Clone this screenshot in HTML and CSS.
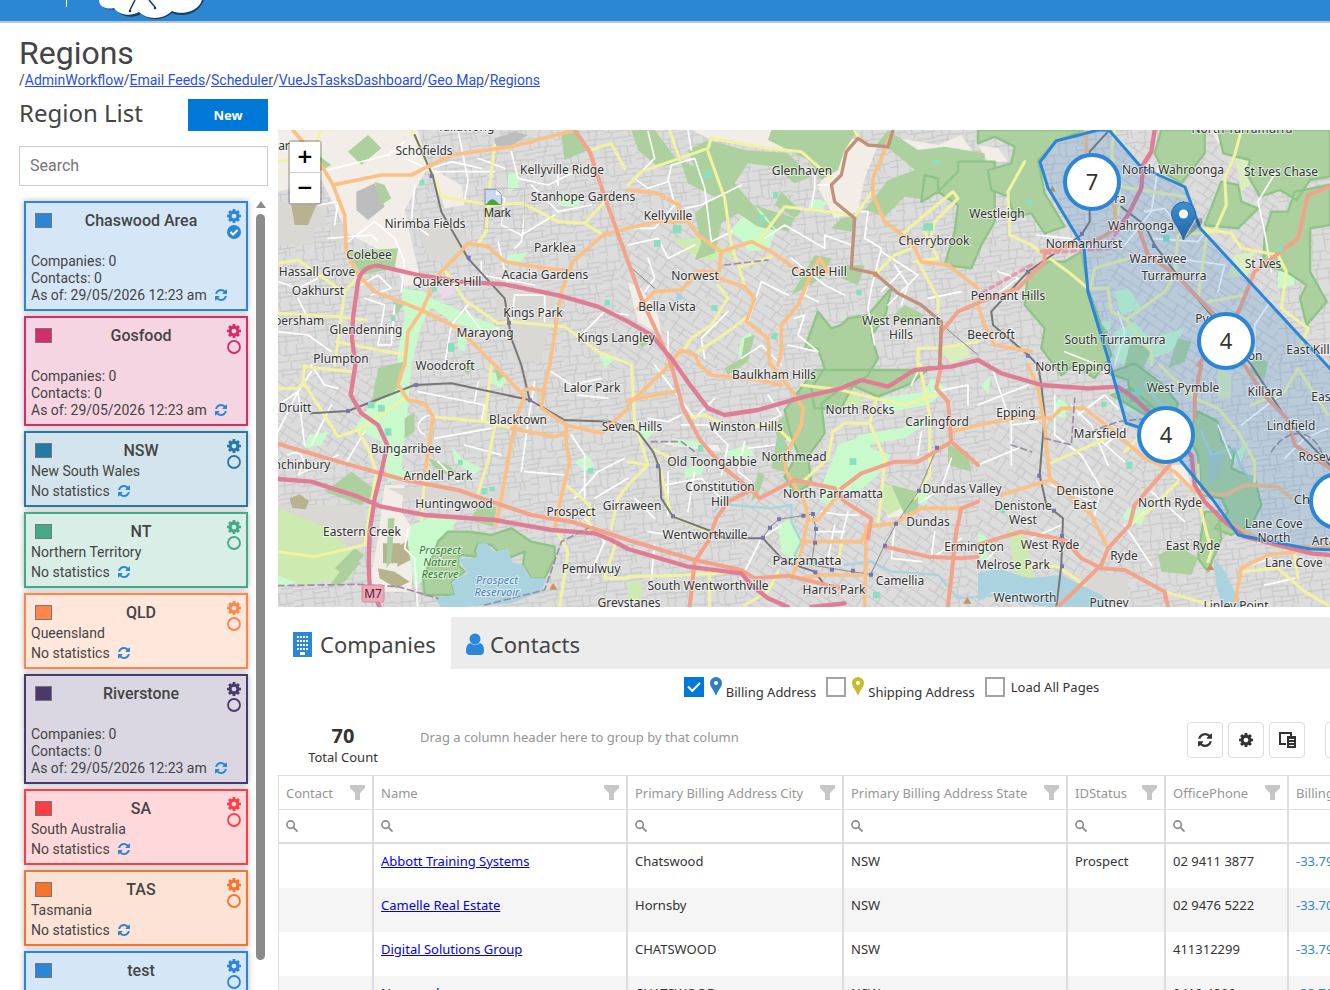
FILE: index.html
```
<!DOCTYPE html>
<html lang="en">
<head>
  <meta charset="utf-8">
  <title>Regions</title>
  <link rel="stylesheet" href="styles.css">
</head>
<body>

<svg class="defs" aria-hidden="true">
  <symbol id="cog" viewBox="0 0 1536 1536"><path d="M1024 768q0-106-75-181t-181-75-181 75-75 181 75 181 181 75 181-75 75-181zm512-109v222q0 12-8 23t-20 13l-185 28q-19 54-39 91 35 50 107 138 10 12 10 25t-9 23q-27 37-99 108t-94 71q-12 0-26-9l-138-108q-44 23-91 38-16 136-29 186-7 28-36 28h-222q-14 0-24.500-8.500t-11.500-21.500l-28-184q-49-16-90-37l-141 107q-10 9-25 9-14 0-25-11-126-114-165-168-7-10-7-23 0-12 8-23 15-21 51-66.500t54-70.500q-27-50-41-99l-183-27q-13-2-21-12.500t-8-23.500v-222q0-12 8-23t19-13l186-28q14-46 39-92-40-57-107-138-10-12-10-24 0-10 9-23 26-36 98.500-107.500t94.500-71.500q13 0 26 10l138 107q44-23 91-38 16-136 29-186 7-28 36-28h222q14 0 24.500 8.500t11.500 21.500l28 184q49 16 90 37l142-107q9-9 24-9 13 0 25 10 129 119 165 170 7 8 7 22 0 12-8 23-15 21-51 66.500t-54 70.500q26 50 41 98l183 28q13 2 21 12.500t8 23.500z"/></symbol>
  <symbol id="refresh" viewBox="0 0 1536 1536"><path d="M1511 928q0 5-1 7-64 268-268 434.500t-478 166.500q-146 0-282.500-55t-243.500-157l-129 129q-19 19-45 19t-45-19-19-45v-448q0-26 19-45t45-19h448q26 0 45 19t19 45-19 45l-137 137q71 66 161 102t187 36q134 0 250-65t186-179q11-17 53-117 8-23 30-23h192q13 0 22.500 9.500t9.500 22.500zm25-800v448q0 26-19 45t-45 19h-448q-26 0-45-19t-19-45 19-45l138-138q-148-137-349-137-134 0-250 65t-186 179q-11 17-53 117-8 23-30 23h-199q-13 0-22.500-9.500t-9.500-22.500v-7q65-268 270-434.500t480-166.500q146 0 284 55.500t245 156.500l130-129q19-19 45-19t45 19 19 45z"/></symbol>
  <symbol id="ring" viewBox="0 0 14 14"><circle cx="7" cy="7" r="6" fill="none" stroke="currentColor" stroke-width="1.800"/></symbol>
  <symbol id="tick" viewBox="0 0 14 14"><circle cx="7" cy="7" r="7"/><path d="M3.500 7l2.500 2.600L10.600 5" fill="none" stroke="#fff" stroke-width="2"/></symbol>
  <symbol id="funnel" viewBox="0 0 15 15"><path d="M0 0h15v3l-5 5v7H5V8L0 3z"/></symbol>
  <symbol id="lens" viewBox="0 0 13 13"><circle cx="5" cy="5" r="4" fill="none" stroke="currentColor" stroke-width="1.800"/><path d="M8 8l4.500 4.500" stroke="currentColor" stroke-width="2"/></symbol>
  <symbol id="pin" viewBox="0 0 12 19"><path d="M6 0a6 6 0 0 1 6 6c0 4-4 7-6 13C4 13 0 10 0 6a6 6 0 0 1 6-6z"/><circle cx="6" cy="6" r="2" fill="#fff"/></symbol>
</svg>

<header class="topbar">
  <span class="topbar-line"></span>
  <svg class="logo" viewBox="0 0 108 21">
    <path d="M2 0c0 8 8 11 16 9 4 8 17 10 25 5 8 7 22 7 31-1 8 4 26 3 32-13z" fill="#153f63"/>
    <path d="M1 0c0 7 8 10 15 8 5 7 16 9 25 4 8 8 24 8 33-1 8 4 26 2 30-11z" fill="#fff"/>
    <path d="M37 0l-5 10M51 0l6 7" stroke="#163a5a" stroke-width="1.500"/><circle cx="32" cy="11" r="1.300"/><circle cx="57" cy="8" r="1.300"/>
  </svg>
</header>

<div class="page-head">
  <h1>Regions</h1>
  <nav class="crumbs">/<a href="#">AdminWorkflow</a>/<a href="#">Email Feeds</a>/<a href="#">Scheduler</a>/<a href="#">VueJsTasksDashboard</a>/<a href="#">Geo Map</a>/<a href="#">Regions</a></nav>
</div>

<div class="layout">
  <aside class="sidebar">
    <div class="sidebar-head">
      <h2>Region List</h2>
      <button class="new">New</button>
    </div>
    <input class="search" type="text" placeholder="Search" aria-label="Search">
    <div class="list-wrap">
      <div class="list">
        <section class="card blue">
          <i class="swatch"></i><h3>Chaswood Area</h3>
          <div class="tools"><svg><use href="#cog"/></svg><svg><use href="#tick"/></svg></div>
          <p class="desc"></p>
          <div class="stats">Companies: 0<br>Contacts: 0<br>As of: 29/05/2026 12:23 am <svg><use href="#refresh"/></svg></div>
        </section>
        <section class="card pink">
          <i class="swatch"></i><h3>Gosfood</h3>
          <div class="tools"><svg><use href="#cog"/></svg><svg><use href="#ring"/></svg></div>
          <p class="desc"></p>
          <div class="stats">Companies: 0<br>Contacts: 0<br>As of: 29/05/2026 12:23 am <svg><use href="#refresh"/></svg></div>
        </section>
        <section class="card teal">
          <i class="swatch"></i><h3>NSW</h3>
          <div class="tools"><svg><use href="#cog"/></svg><svg><use href="#ring"/></svg></div>
          <p class="desc">New South Wales</p>
          <p class="nostats">No statistics <svg><use href="#refresh"/></svg></p>
        </section>
        <section class="card green">
          <i class="swatch"></i><h3>NT</h3>
          <div class="tools"><svg><use href="#cog"/></svg><svg><use href="#ring"/></svg></div>
          <p class="desc">Northern Territory</p>
          <p class="nostats">No statistics <svg><use href="#refresh"/></svg></p>
        </section>
        <section class="card peach">
          <i class="swatch"></i><h3>QLD</h3>
          <div class="tools"><svg><use href="#cog"/></svg><svg><use href="#ring"/></svg></div>
          <p class="desc">Queensland</p>
          <p class="nostats">No statistics <svg><use href="#refresh"/></svg></p>
        </section>
        <section class="card purple">
          <i class="swatch"></i><h3>Riverstone</h3>
          <div class="tools"><svg><use href="#cog"/></svg><svg><use href="#ring"/></svg></div>
          <p class="desc"></p>
          <div class="stats">Companies: 0<br>Contacts: 0<br>As of: 29/05/2026 12:23 am <svg><use href="#refresh"/></svg></div>
        </section>
        <section class="card red">
          <i class="swatch"></i><h3>SA</h3>
          <div class="tools"><svg><use href="#cog"/></svg><svg><use href="#ring"/></svg></div>
          <p class="desc">South Australia</p>
          <p class="nostats">No statistics <svg><use href="#refresh"/></svg></p>
        </section>
        <section class="card orange">
          <i class="swatch"></i><h3>TAS</h3>
          <div class="tools"><svg><use href="#cog"/></svg><svg><use href="#ring"/></svg></div>
          <p class="desc">Tasmania</p>
          <p class="nostats">No statistics <svg><use href="#refresh"/></svg></p>
        </section>
        <section class="card blue">
          <i class="swatch"></i><h3>test</h3>
          <div class="tools"><svg><use href="#cog"/></svg><svg><use href="#ring"/></svg></div>
        </section>
      </div>
      <div class="scroll"><i class="scroll-up"></i><i class="scroll-thumb"></i></div>
    </div>
  </aside>

  <main>
    <div class="map">
      <svg class="tiles" viewBox="278 130 1052 477" preserveAspectRatio="xMinYMid slice">
        <defs>
          <pattern id="streets" width="150" height="132" patternUnits="userSpaceOnUse" patternTransform="rotate(-8)">
            <path class="street" d="M0 18h60l8 10h82M0 44h42v-26M42 44l38 4 12-20M0 72h30l6-28M36 72h54V48h60M90 72l60 6M60 72v60M0 100h60M24 100V72M24 132v-32M60 100l46 6V74M106 106h44M128 78v28M112 28V0M140 28v20M20 18V0M60 18V0M84 132v-28M120 132v-26M60 118h60M0 118h24M112 14h38M80 0v27M18 44V18M118 60h32M60 86h46M0 58h36M132 106v26"/>
          </pattern>
          <pattern id="streets2" width="126" height="144" patternUnits="userSpaceOnUse" patternTransform="rotate(34)">
            <path class="street" d="M0 14h126M0 38h66M84 14v62M66 38h60M0 62h84M24 14v48M46 38v24M0 90h40V62M40 90h86M104 38v52M0 114h126M20 90v24M62 90v54M92 114v30M30 114v30M0 132h30M62 130h64M60 14V0M108 14V0"/>
          </pattern>
          <linearGradient id="pinFill" x2="0" y2="1"><stop stop-color="#3a90d0"/><stop offset="1" stop-color="#2465a4"/></linearGradient>
        </defs>

        <g transform="translate(278 125) scale(.33333)">
          <rect width="3156" height="1450" fill="#dcdcdc"/>
          <rect width="3156" height="1450" fill="url(#streets)"/>
          <path fill="#dcdcdc" d="M1050 250h500l-60 480h-500zM0 760h420v260H0zM2150 860h460l-60 590h-500zM2500 60h500v700h-500zM1400 1050h600v400h-600z"/>
          <path fill="url(#streets2)" d="M1050 250h500l-60 480h-500zM0 760h420v260H0zM2150 860h460l-60 590h-500zM2500 60h500v700h-500zM1400 1050h600v400h-600z"/>

          <!-- farmland and industrial -->
          <path fill="#f2eee7" d="M0 15h420l30 110-70 130 20 90 30 130-50 10-40-90-130-70-80-160L0 200zM460 130l90 50 10 60-60 10zM1240 15h430l-50 60-200-10-120-20zM1720 40l80 20-40 100-20 100-70 20-50-90 30-60zM1860 40l120 20 70-30 40 60-100 10-90-10zM2100 60l60 10 30 40-60 0zM2800 15l50 0 20 30-50 10zM320 1080l60 0-10 80 40 60-10 180h-130l30-160z"/>
          <path fill="#d9d8d4" d="M0 230l120 10 60 120-180 0zM110 360h90v-60l-90 10zM410 320l120-40 60 90-70 60-60-30zM330 1090h360l20 70-320-40zM0 1140h260v170H0zM640 490l190 20-40 200h-80zM2250 1350h300v90h-300z"/>
          <path fill="#bdbdbd" d="M235 200l55-25 30 70-50 40-35-30zM650 40l60-20 40 10-60 40-40-10z"/>
          <path fill="#b7b38f" d="M40 240h75l-25 60H50zM315 1255h52v60h-52zM360 1265l30-20 8 60-40 20zM300 1330l50 10 45 30-40 20-50-30zM35 1120l30-12 28 20-10 25-40-4z"/>
          <path fill="#ebdbe8" d="M475 490l40-15 20 30-40 15z"/>
          <path fill="#f2efe9" d="M1050 470l40 20 50 80 10 60-70-40zM2680 1020l40 0 20 60-50-20zM1820 1150l50-10 10 30-50 10zM1150 950l170 10 10 20-160-20z"/>

          <!-- parks -->
          <g class="park">
            <path d="M370 490l70 10 30 30-40 70-30 120-10 130-20 180 40 30-80 10-20-120-80-40 60-90 60-20 10-120 20-100zM400 1200l80-30 60 10-50 90-40 80-40 40-20-130zM460 520l140 60 70 30-60 10-90-30-70-50zM480 1390l40-20 60 20-10 40z"/>
            <path d="M1410 260l60-10 30 60-30 60-60 10-20-40-40-20zM1640 1060l40-100 80-30 20 40 60 20-40 60-70 60-40-20-40 50-30-20zM1800 820l140-20 20-40 50 30-60 50-110 20zM1740 930l130-20 60-30 10 20-60 40-120 20zM1500 1200l40-20 30 60 0 80-60-40z"/>
            <path d="M2510 620l60-30 70 80-50 60-80-20zM2510 500l40-10 40 60-60 20zM2110 130l40 40-20 90-40-20zM2110 780l30-30-10 60zM2550 780l40 20 10 60-60 0zM2550 1150l60 0-20 50-60-20zM0 1300l60 10 60 40-120 40zM540 620l30 10-10 50-20-10zM2100 1220l40 30-20 60-20-10zM2840 1010l70-60-20 60zM2650 630l70-20-40 70-60 20zM3000 440l50-20 0 60-50 10z"/>
            <path d="M690 390l60-10-20 30-50 10zM640 740l50 20-20 30-40-20zM960 680l50 20-30 30zM520 960l30 40 60 30-20 20-60-40zM890 1010l40-20 20 30-30 20zM90 930l60-10-20 40-50 10zM1180 940l80 10 20 20-90-10zM1100 900l30 20-30 30-20-20zM1220 1030l60-10-10 30-50 10zM1340 980l70-20 20 30-60 20zM1630 780l20 20-10 40-30-20zM2340 820l30 20-10 40-40-10zM2470 590l30 0-10 40-20 0zM1390 640l30-20-10 60-30 20zM1600 220l50 10-20 30-40-10zM1920 1100l40 10-20 30-30-10zM850 210l60 10-10 30-60-10zM690 150l30-10 0 50-30 10zM620 1230l70 0-20 20-60 0z"/>
          </g>
          <path fill="#cdebb0" d="M1180 340l110 0 80 50-80 20-60-30zM0 1150l150 60 90 90-20 60-150 20-70-30zM1810 1080l60 0 20 60-60 30-20-40zM2190 1210l50 20 30 130-60-10zM1685 800l60 0 10 40-60 5zM1050 1370l40 0 0 60h-40z"/>
          <path fill="#dcedc0" d="M2870 390l60-10-20 70-60 10zM2870 100l60 0 10 60-50 40zM1980 670l80-15 20 40-60 20zM2820 730l40 20 0 70-40 0z"/>

          <!-- bushland -->
          <g class="bush">
            <path d="M1060 15h70l60 80 60 30-20-50 60-30 110 30 130 10 70 70-50 20-60-50-80-10-40 60 60 70 60 70-50-10-60-40-50 30-20 90-60 20 20-50-20-90 60-50-80-40-20-60-70 10-60-50zM1480 15h260l-40 60-20 60-50 30-40-60-120-60zM1830 15l90 60 80-10 120 20v110l-60 20-60-40-50 50-70-10-60 60-60-20 70-90 80-30-70-60-50-10zM210 80l60-50 40 40-60 50zM60 120l60-30 40 30-90 50zM290 170l30 10 20 40-30 20zM210 380l150-10-10 60-100 20zM850 30l50-15 30 60-70 30zM330 720l50-10-20 80-80 50 20-110zM140 1100l80-60 80 60-50 40zM600 1145l55 0-10 60-70-20zM450 1000l60 20 60 50-40-10-60-30zM170 1330l60-60 30 20-60 60zM1540 510l70-120 50 10-30 60-50 30zM1500 920l40 60-20 60-40-10z"/>
            <path d="M1700 420l60 0-20 60-50-20zM1880 540l60 30-40 30-60-20zM1490 900l40-40 40 10-40 70-30 20zM1840 1080l80 20 0 50-40 20zM2010 960l60 20 10 60-70-20zM1690 280l50-10-20 50-60-10z"/>
            <path d="M2640 1290l60-30 60 40-20 50-90-10zM2480 190l0 40 40-20zM560 740l0-20h30l-20 30z"/>
            <path d="M1430 240l120 40-20 40-40-10-30-40zM1510 200l60 60-20 20-60-40zM1400 640l30-10-20 80-60 40-10-20 50-30zM1440 1040l20 10-20 60-20 20zM345 530l30 10-20 30zM380 880l30-20 0 60-30 20zM330 1180l20 0-10 130-15 20zM2160 130l40 20-20 40-30-20zM2560 640l60 40-30 60-50-20zM2440 560l50 60-10 80-40-60zM2700 640l40 10-20 60-50 20zM2930 690l40 20-10 50-50-10zM650 730l30 20-20 20zM1080 640l40-20 10 20-40 30zM200 1320l50-10-50 60-50 20z"/>
          </g>
          <g class="reserve">
            <path d="M1940 150l40 10 0 40 60-60 0-30h110v180l-40 70-30 70-80-10 30-100 10-80-60-40-50 30zM1620 560l40 50 30-10 20-20 60-10 70-80-20 90-40 50 20 70-30 50-50 40-30 60h-80l-10-60 40-60-20-60-40 0zM1610 735h290l60-10-60 50-100 40-90-40-80 60 10 90-50 70 10 80-50 30-30-50 40-70-20-50-20-80z"/>
            <path d="M2100 15h320l-80 30-60 60 20 100 60 100-60 20-40-60-50 10-20-60-50-20-10-60 70-20 10-50-60-30-50 20zM2250 450l60-40 50 0 50-30 20 110 70 200-50 70-60-40-40 30-60-80 10-60-60-70zM2650 15h130v70l-70 90-50-30-30-60zM2820 15h336v140l-60 10-40 60-50-30-60 20-40-70 10-40-80-20zM2830 170l50 10 10 50 50 20-60 60-100-10zM2960 330l20-70 50 0 20-60 106-20v120l-60 10 0 130 50 90-60 70-20-80 20-40-60-40-70-20z"/>
            <path d="M2490 745l80-30 80 60 50 60-20 70-50-10-20-50-50-20-10-60zM2760 860l60 30 10 60 40 30-10 50 70 30 20 80-30 60-60 30-50-20 40-50-20-40-60-10-10-120-30-60zM2780 1160l40 0 10 80-40 100-30-40zM2500 810l60-20 80 70-20 20z"/>
            <path d="M440 1410l-5-50 35-80 10-30 30-30 60 0 70 10 60-20 60 40 70 15v35l-30 60h-40l-25-40 5-40-50 20-30-20-20-20-40-5-10 25 10 15-55-5-5 30 20 20-40 30 10 40h-50z"/>
          </g>

          <!-- water -->
          <path class="water" d="M470 1420l60-10-10-40 50-25-30-45 55 0 5-45 25 0 25 25 40-10 10 40 35 10 25 40h45l-15 40-90 35-140 11h-70zM2100 1345l60-15 90 30 100-10 120 60 40 40h-170l-140-20-60-30-40 30zM2805 1300l30 30 60 120h-60l-20-70zM1200 500l20 20-30 10z"/>
          <path fill="#aac8c0" d="M2790 965l50 30-20 60-30 20z"/>
          <path class="river" d="M1310 1160l30-40 20 20 120 10 60-10 0 50 30 60-20 40 20 30 60-10M2600 780l50 60 20 0M2770 920l30 70 70-20 20 60 30 30"/>
          <path class="river" stroke-width="9" d="M1700 1320l80-10 60 30 140 10 60 70 120-10"/>

          <!-- minor roads -->
          <g class="minor">
            <path d="M130 140l200-50 50-40M380 100l90 40 180 0M540 15l30 150-10 60M150 340l130-10 20 20M120 240l60-10-10 70M210 350l80-60 60 50 30 70-10 90M410 180l-10 110 50 40M700 80l20 80 90 20 80-40M840 130l0 50M610 410l0 40 160 30M660 350l30 130M710 370l20-20 10-80M250 480l50-30 40 40-60 20M260 520l60 20-20 120 40 0 10-120M500 720l20-120 50-60M560 550l60 80 40-20M700 590l10-80 90 0 0 80M900 640l80-80 70 10M760 180l80 80 100-20M0 470l60 20 60-30M60 520l40 80M0 620l90 10 70 50M430 140l90-30 90 20M600 100l80 30M640 200l40 20-10 80 60 30 100-60"/>
            <path transform="translate(1050)" d="M60 20l20 80-60 60 40 30 60-20 10-50 70-20 30 90 20 160 60-30M120 160l20 80-60 70-80 0M0 360l90-20 30 60 80-40M340 180l-120 60-50 10M180 15l10 60M560 140l0 50-10 60M610 180l-40 0M410 340l60-40 120 70 0-40 80 30M490 400l100 80 60 30M360 590l40-120 80 40M340 700l60-40 60 60M700 260l20 0-10 80 50 30-30 120-10 60 20 110M760 380l110 70-90 90M800 420l40 60-20 60M120 620l0 100M500 580l30-10-20 60 60 50-90-20M60 400l20 60-30 40M300 560l-80 80 10 60M550 450l-20 60 40 20M820 440l-60 60M900 520l100-20"/>
            <path transform="translate(2100)" d="M540 130l-20 130-80 100M500 260l60-10 30 40M590 400l150 20-20 80M900 130l-60 100 20 90 20 120M175 330l100 10 60 20M60 440l60 20-80 60M870 540l-40 60 0 90M420 560l20 60-30 100M520 340l140 10 30-40M260 680l100 40"/>
            <path transform="translate(0 720)" d="M0 200l60-120 40-60M60 80l20 160M100 240l60-120M440 210c-40-20-10-60 20-60M470 220l170-30M770 50l-20 120-20 150M880 210l40 60 0 130M740 320l120 10M0 120l60-40M560 240l110 30M600 50l-10 60M200 300l60-100M30 270c40-20 60 10 30 60l120-60M890 400l70-80 80-40M920 460l60 70-50 110M950 400l100-60M420 740l-10-160-30-30 10-60M420 80l200 40-10 50M100 0l40 60 40 10M820 20l60 40 90-20M900 90l90 10M480 290l60 60"/>
            <path transform="translate(1050 720)" d="M80 0l120 160 60-60M160 180l80 0 60 60-20 90M120 320l0 130M200 320l-20 120M110 360l110-20 60 60M360 250l80-10M420 90l40 60-80 40M620 480l-20 100M660 440l-20 80M340 640l60-120 60-40M560 500l90 0M80 540l-10 100M880 200l-10 70M970 280l-30 90-60 40M1000 520l-90 60 10-80M800 480l-10 100 90 10M350 230l-20 90 40 30M920 80l100-20 0 60M60 160l60 10 40-20M20 400l60 60M60 500l140 20M580 440l60 10 50 0M880 0l-30 60"/>
            <path transform="translate(2100 720)" d="M40 0l60 180 0 120M100 180l80-10M230 90l0 120 80 60 60 100-20 80M0 120l150-60M0 300l120-50M300 150l80-60 40 40M520 380l100 90M360 220l80 70M440 480l80 120M10 600l60-60M790 180l130-100M920 280l60-60 70-30M720 180l40 100M220 360l120 50M250 480l-90 40M420 520l80-80M280 120l60 60 50 120M380 240l60-50M820 600l60-20M860 660l90-20"/>
          </g>

          <g class="secondary">
            <path d="M650 60L630 230 625 320 600 355M400 15L460 140 490 215 640 240 735 235 840 290 920 295 980 230M920 295L975 330M940 75L1000 55 1040 130M0 110L100 90 130 15M0 415L60 405 180 490M0 565L180 575 265 585M240 455L200 500 170 720M175 650L380 690M500 435L560 525 660 595 700 590 860 605 960 680 1050 715"/>
            <path transform="translate(1050)" d="M125 15L155 105M0 180L40 140 240 70 250 40 420 70 520 80 610 160M240 80L290 220 310 360 350 480M390 350L470 245 640 265 680 275 740 190M340 425L430 395M680 15l10 20M820 330L890 270 975 200 990 220 920 290 910 330M890 320l40 80-70 10M750 440L800 390 850 370M870 410L930 520 930 560M270 480L300 520 250 600 190 640 165 680M210 680L300 620 350 580M870 670h60l120-20M870 670v60"/>
            <path transform="translate(2100)" d="M140 110L90 200 95 330 160 360 270 440 330 490 390 490 400 560 440 580 520 680 520 720M450 400L350 430 340 480M430 185L620 215M790 15L770 90 740 160 745 240 710 320 600 330 590 450 560 500 450 580M660 310L760 325 790 370 900 390 925 440 910 550 990 610 970 660M685 340L660 520M690 530L800 510M410 20L400 80 430 230 410 290"/>
            <path transform="translate(0 720)" d="M80 0L75 50 180 215 240 195 380 100M240 195L270 250 295 320 260 540 110 575 0 560M640 0L620 170M465 155L620 170 705 190M650 185L630 290 600 385M440 340L430 465M870 365L935 420 930 500M1050 360L1020 400 1000 490M0 70H60L80 50M80 5L220 20M1015 530L980 640H1050M830 490L870 560 845 726"/>
            <path transform="translate(1050 720)" d="M10 0L20 170 60 300 0 360M0 290L60 300M80 255L130 280M180 160L230 150 290 180M380 180H440L490 230M520 60L640 75 740 100 830 120 920 90M530 345L600 280 615 200 650 175H725L770 280 760 400 750 470M745 100L725 175M875 0L905 150V330L860 400M0 635L180 630 330 620M245 610V726M350 720L420 680 450 620M90 290L130 450 240 500M640 530L630 600"/>
            <path transform="translate(2100 720)" d="M215 295L385 220M480 220L440 260M600 350L520 430 470 470M660 300L665 420 700 560 690 590M560 680L700 720M150 600L240 605 320 660M545 0L650 100 720 130 780 200 830 290V350M820 120L920 80 960 10 1050 150M790 620L900 610 980 680 1050 720M950 570L960 640"/>
          </g>

          <g class="rail">
            <path d="M410 30L465 155 490 260 570 400 680 520 700 640 730 720 755 825 860 885 1000 890 1080 920 1125 980 1145 1030 1150 1120 1185 1175 1290 1215 1340 1240 1455 1240 1520 1310 1610 1340 1640 1380M100 865L210 858 410 780 520 775 755 825M2280 720L2290 780 2300 870 2285 1050 2305 1140 2355 1180 2350 1320 2335 1446M2490 20L2435 80V290L2410 330 2250 440 2140 560 2145 600 2250 690 2280 720M2530 245L2600 300 2630 360 2690 440 2800 570 2920 720 3030 890 3156 1020"/>
          </g>
          <path class="lightrail" d="M1455 1238L1475 1208 1502 1183 1575 1172 1605 1167 1613 1210 1610 1252 1600 1320 1720 1340 1778 1348 1820 1260 1855 1196 1923 1097 1977 968M1980 590L2100 690M1050 420L1130 490"/>

          <g class="primary">
            <path d="M45 15L130 120 165 180 200 270 205 380 240 450 290 500 430 555 540 610 650 720M165 180L310 150 400 150 520 90 700 65 890 15M1050 310L975 330 885 410 870 440 740 420 680 410 630 365 570 355 530 400 480 450 430 560 390 620 380 720M885 410L850 500 815 720"/>
            <path transform="translate(1050)" d="M0 195L90 205 150 240 180 290 210 330 280 380 370 350 430 380 500 430 550 450 600 440 575 400 540 470 510 540 460 600V680L450 720M280 380L270 460 350 485 380 520 355 590 420 640 425 720M795 15L735 160V210L770 290 850 350 880 410 960 420 1050 490M0 310L90 290 170 290M30 550L80 500 160 495 210 440H270M120 720L160 675 200 690 215 720"/>
            <path transform="translate(2100)" d="M325 15V90L410 250 415 290M0 540l20 60 30 60 110 20"/>
            <path transform="translate(0 720)" d="M650 0L740 95 725 130 700 230 670 400 655 480M378 0L360 60 390 105 440 115 465 155 440 330M815 0L800 60 790 130 865 180V240L875 290 855 370 830 490M700 190L830 215 865 205M865 180L970 205 1050 130M740 75l20-5 40 10"/>
            <path transform="translate(1050 720)" d="M0 105L140 80M0 120L125 0M215 0L250 30 390 45 460 60M430 0L490 75 525 130 520 180 470 280 475 320 530 410 540 460 520 560 490 640M630 390L570 465H545M520 530H700L720 485 800 475 880 430H1000M715 480L710 726M1050 180L970 200M520 640l60-10h120"/>
            <path transform="translate(2100 720)" d="M0 180L130 155 220 160 250 130H320L420 210 500 280 590 320 650 380 740 390 800 360 900 365 940 400M740 465L800 500 900 545H1056M150 0L180 70 200 180 215 340 340 450 385 540M70 390L215 345M1000 555L870 570 790 610 770 720"/>
          </g>

          <g class="trunk">
            <path d="M0 957L200 1015 380 1065 540 1095 640 1130 760 1170 880 1190 960 1215 1050 1245 1250 1305 1390 1335 1430 1360 1530 1352 1690 1390M890 15L935 80 985 230 1050 410 1090 520 1145 640 1180 720 1215 850 1270 950 1340 1030 1420 1095 1445 1120 1550 1065 1670 1090 1700 1130 1780 1180 1770 1240M1690 1090L1750 1045 1850 1010H1920L2020 950 2010 830 1975 790 1990 720M2020 950L2100 1020M1420 1095L1350 1130 1315 1180 1290 1250 1250 1310 1235 1446M2100 1130L2050 1150 2035 1220 2010 1446M1820 1265L1950 1295 2050 1300 2100 1295"/>
            <path d="M2675 1020L2570 1140 2555 1200 2490 1270 2470 1320 2340 1446M2100 1260L2160 1240 2230 1220 2360 1245 2410 1300 2470 1330 2540 1335 2660 1400 2670 1446M2770 720L2750 820V880M2900 720L2950 800 3030 885 3050 960 3156 1030M2585 320L2610 390 2700 455 2800 560 2860 620M3156 185L3090 210 3060 340 2930 440 2890 540 2870 580 2760 720M2515 310L2450 350 2290 380M2300 380V410L2220 490 2120 525 2040 560 1990 620 1985 720"/>
          </g>
          <g class="motorway">
            <path d="M232 720L222 640 225 580 240 470Q250 425 300 422L420 450 545 470 680 478 845 512 960 545 1050 590 1120 630 1180 700 1240 785 1290 850 1340 870 1440 855 1580 815 1690 790 1750 765 1830 785 1910 735 2020 725 2100 705 2170 745 2290 780 2430 790 2520 785 2570 820 2620 870 2740 990 2750 1080 2780 1130 2840 1190 2900 1235 3100 1285 3156 1290M232 720L218 810 250 865 300 900 328 960 310 1040 290 1120 275 1220 272 1320 275 1380 305 1446M0 1062L100 1070 240 1115 310 1145 440 1170 650 1185 820 1215 950 1225 1000 1245 1050 1272 1230 1325 1390 1345 1420 1380 1470 1420 1530 1446M2630 15L2620 80 2595 120 2590 190 2550 270 2515 320M1600 1446L1700 1435"/>
          </g>
          <path class="tunnel" d="M2515 320L2495 370 2300 385M2260 420L2100 510"/>
          <path class="oldroad" d="M1845 15L1830 65 1770 60 1740 40 1705 80 1690 150 1660 180 1670 230 1730 280 1720 430 1790 445 1860 505 1930 540 1990 590 1985 720"/>
          <path class="dashed" d="M0 1382L240 1378 360 1385 480 1420 M620 1440L800 1395 850 1250 930 1210M2200 960l60 20M2300 940l80 20 10-140M1120 950l90 0 40 30M1340 420l130-15M2440 920l80-30 90-10M2980 980c60-90 140-60 160 30"/>
          <path class="stations" d="M455 147h12v12h-12zM566 392h12v12h-12zM687 587h12v12h-12zM408 774h12v12h-12zM204 852h12v12h-12zM750 820h12v12h-12zM1134 1018h12v12h-12zM1179 1168h12v12h-12zM1449 1232h12v12h-12zM1470 1202h12v12h-12zM1497 1177h12v12h-12zM1570 1166h12v12h-12zM1599 1161h12v12h-12zM1608 1206h12v12h-12zM1605 1247h12v12h-12zM1656 1328h12v12h-12zM1606 1336h12v12h-12zM1719 1331h12v12h-12zM1773 1343h12v12h-12zM1815 1256h12v12h-12zM1848 1190h12v12h-12zM1917 1091h12v12h-12zM1971 962h12v12h-12zM2406 320h12v12h-12zM2622 357h12v12h-12zM2244 434h12v12h-12zM2244 686h12v12h-12zM2278 1046h12v12h-12zM2322 1151h12v12h-12zM2346 1227h12v12h-12zM2346 1318h12v12h-12z"/>
          <path class="peak" d="M1784 455l10-18 12 18zM814 1394l12-20 12 20zM2056 1436l12-20 12 20zM2785 1335l12-20 12 20zM2315 198l8-16 10 18z"/>
          <path class="pitch" d="M462 480h14v20h-14zM510 655h20v25h-20zM1128 345h20v20h-20zM1185 300h25v25h-25zM1280 135h20v25h-20zM1440 270h20v20h-20zM1485 200h16v20h-16zM1935 295h30v22h-30zM1965 105h20v14h-20zM270 830h20v20h-20zM300 840h20v20h-20zM320 910h20v22h-20zM610 1090h18v18h-18zM635 1085h16v14h-16zM540 1005h14v16h-14zM930 1030h16v16h-16zM1500 950h16v16h-16zM1715 1000h20v20h-20zM2245 225h18v16h-18zM2655 330h20v20h-20zM2710 250h18v18h-18zM2545 1010h18v22h-18zM2570 790h18v22h-18zM2470 830h16v16h-16zM1785 1400h20v20h-20zM1260 960h16v20h-16zM1480 625h18v18h-18zM1735 495h16v16h-16zM1300 540h18v18h-18zM3000 360h14v20h-14zM2170 1150h12v14h-12zM980 525h16v16h-16zM340 570h12v18h-12zM425 165h14v16h-14z"/>
        </g>

        <path class="region" d="M1040 162L1056 141 1098 130H1109L1141 167 1185 187 1200 228 1335 374V550L1310 549 1238 535 1213 500 1180 460 1141 428 1126 423 1110 365 1088 292 1084 248 1048 188z"/>

        <g class="labels">
          <text x="466" y="131">Tallawong</text><text x="424" y="155">Schofields</text><text x="562" y="174">Kellyville Ridge</text><text x="583" y="201">Stanhope Gardens</text>
          <text x="425" y="228">Nirimba Fields</text><text x="555" y="252">Parklea</text><text x="369" y="259">Colebee</text><text x="317" y="276">Hassall Grove</text>
          <text x="318" y="295">Oakhurst</text><text x="545" y="279">Acacia Gardens</text><text x="447" y="286">Quakers Hill</text><text x="533" y="317">Kings Park</text>
          <text x="299" y="325">bersham</text><text x="366" y="334">Glendenning</text><text x="485" y="337">Marayong</text><text x="616" y="342">Kings Langley</text>
          <text x="341" y="363">Plumpton</text><text x="445" y="370">Woodcroft</text><text x="592" y="392">Lalor Park</text><text x="295" y="412">Druitt</text>
          <text x="518" y="424">Blacktown</text><text x="632" y="431">Seven Hills</text><text x="406" y="453">Bungarribee</text><text x="302" y="469">nchinbury</text>
          <text x="438" y="480">Arndell Park</text><text x="454" y="508">Huntingwood</text><text x="362" y="536">Eastern Creek</text><text x="571" y="516">Prospect</text>
          <text x="591" y="573">Pemulwuy</text><text x="629" y="607">Greystanes</text><text x="284" y="150">ar</text>
          <text x="802" y="175">Glenhaven</text><text x="668" y="220">Kellyville</text><text x="934" y="245">Cherrybrook</text><text x="695" y="280">Norwest</text>
          <text x="819" y="276">Castle Hill</text><text x="667" y="311">Bella Vista</text><text x="901" y="325">West Pennant</text><text x="901" y="339">Hills</text>
          <text x="774" y="379">Baulkham Hills</text><text x="860" y="414">North Rocks</text><text x="937" y="426">Carlingford</text><text x="746" y="431">Winston Hills</text>
          <text x="712" y="466">Old Toongabbie</text><text x="794" y="461">Northmead</text><text x="720" y="491">Constitution</text><text x="720" y="506">Hill</text>
          <text x="833" y="498">North Parramatta</text><text x="962" y="493">Dundas Valley</text><text x="928" y="526">Dundas</text><text x="632" y="510">Girraween</text>
          <text x="705" y="539">Wentworthville</text><text x="807" y="565" class="city">Parramatta</text><text x="900" y="585">Camellia</text><text x="708" y="590">South Wentworthville</text>
          <text x="834" y="594">Harris Park</text><text x="974" y="551">Ermington</text><text x="1016" y="417">Epping</text><text x="1100" y="438">Marsfield</text>
          <text x="1085" y="495">Denistone</text><text x="1085" y="509">East</text><text x="1023" y="510">Denistone</text><text x="1023" y="524">West</text>
          <text x="1170" y="507">North Ryde</text><text x="1050" y="549">West Ryde</text><text x="1124" y="560">Ryde</text><text x="1193" y="550">East Ryde</text>
          <text x="1013" y="569">Melrose Park</text><text x="1025" y="602">Wentworth</text><text x="1109" y="607">Putney</text><text x="1236" y="610">Linley Point</text>
          <text x="1294" y="567">Lane Cove</text><text x="1274" y="528">Lane Cove</text><text x="1274" y="542">North</text><text x="1339" y="545">Artarmon</text>
          <text x="1323" y="461">Roseville</text><text x="1291" y="430">Lindfield</text><text x="1265" y="396">Killara</text><text x="1323" y="401">East</text>
          <text x="1183" y="392">West Pymble</text><text x="1073" y="371">North Epping</text><text x="991" y="339">Beecroft</text><text x="1008" y="300">Pennant Hills</text>
          <text x="1115" y="344">South Turramurra</text><text x="1084" y="248">Normanhurst</text><text x="997" y="218">Westleigh</text><text x="1120" y="203">ra</text>
          <text x="1173" y="174">North Wahroonga</text><text x="1281" y="176">St Ives Chase</text><text x="1242" y="133">North Turramurra</text><text x="1141" y="230">Wahroonga</text>
          <text x="1158" y="263">Warrawee</text><text x="1174" y="280">Turramurra</text><text x="1263" y="268">St Ives</text><text x="1202" y="323">Py</text>
          <text x="1255" y="360">on</text><text x="1317" y="354">East Killara</text><text x="1302" y="504" class="city">Ch</text>
          <g class="nature"><text x="440" y="554">Prospect</text><text x="440" y="566">Nature</text><text x="440" y="578">Reserve</text></g>
          <g class="lake"><text x="497" y="584">Prospect</text><text x="497" y="596">Reservoir</text></g>
        </g>
        <rect x="362" y="585" width="22" height="17" rx="2" fill="#e9a9b8" stroke="#d98a9c"/><text x="373" y="598" class="shield">M7</text>

        <path fill="none" stroke="#bbb" stroke-opacity=".6" d="M484.500 188.500h40v40h-40z"/>
        <path fill="#c5d8f7" stroke="#9a9a9a" d="M485.500 189.500h11l5 5v10h-16z"/><path fill="#4ca33a" d="M486 205q5-9 10-4l4 4z"/><path fill="#fff" d="M496 190v5h5z"/>
        <text x="484" y="217" class="broken">Mark</text>

        <path fill="#000" opacity=".25" d="M1184 240l12-20q8-6 6 4z"/>
        <path fill="url(#pinFill)" stroke="#2a6ba8" d="M1183.500 202a12 12 0 0 1 12 12c0 7-8 14-12 26-4-12-12-19-12-26a12 12 0 0 1 12-12z"/><circle cx="1183.500" cy="214" r="4.500" fill="#fff"/>

        <g class="clusters">
          <circle cx="1092" cy="182" r="27"/><circle cx="1226" cy="341" r="27"/><circle cx="1166" cy="435" r="27"/><circle cx="1338" cy="501" r="27"/>
          <text x="1092" y="190">7</text><text x="1226" y="349">4</text><text x="1166" y="443">4</text>
        </g>
      </svg>
      <div class="zoom"><button aria-label="Zoom in">+</button><button aria-label="Zoom out">−</button></div>
    </div>

    <div class="tabs" role="tablist">
      <button class="tab active" role="tab">
        <svg width="19" height="25" viewBox="0 0 19 25"><path fill="#2b88d8" d="M0 0h19v25H0z"/><path fill="none" stroke="#fff" stroke-width="2" stroke-dasharray="2 1" d="M4 5h11M4 9h11M4 13h11M4 17h11"/><path fill="#fff" d="M7 20h5v3H7z"/></svg>Companies</button>
      <button class="tab" role="tab">
        <svg width="18" height="22" viewBox="0 0 18 22"><circle cx="9" cy="6" r="5.500" fill="#2b88d8"/><path fill="#2b88d8" d="M4 10q5 4 10 0 4 1 4 8 0 4-4 4H4q-4 0-4-4 0-7 4-8z"/></svg>Contacts</button>
    </div>

    <div class="options">
      <label><input type="checkbox" checked><svg class="pin"><use href="#pin"/></svg><span class="low">Billing Address</span></label>
      <label><input type="checkbox"><svg class="pin ship"><use href="#pin"/></svg><span class="low">Shipping Address</span></label>
      <label><input type="checkbox"><span class="plain">Load All Pages</span></label>
    </div>

    <div class="grid-bar">
      <div class="total"><b>70</b>Total Count</div>
      <span class="hint">Drag a column header here to group by that column</span>
      <div class="actions">
        <button aria-label="Refresh"><svg><use href="#refresh"/></svg></button>
        <button aria-label="Settings"><svg><use href="#cog"/></svg></button>
        <button aria-label="Column chooser"><svg class="wide" viewBox="0 0 17 16"><path d="M7 12H1V1h11v3" fill="none" stroke="currentColor" stroke-width="2"/><path d="M8 4h9v12H8z"/><path stroke="#fff" d="M10 7.500h5M10 10.500h5M10 13.500h5"/></svg></button>
        <button class="last" aria-label="Export"></button>
      </div>
    </div>

    <div class="grid-wrap">
      <table>
        <colgroup><col class="c1"><col class="c2"><col class="c3"><col class="c4"><col class="c5"><col class="c6"><col class="c7"></colgroup>
        <thead>
          <tr><th>Contact<svg><use href="#funnel"/></svg></th><th>Name<svg><use href="#funnel"/></svg></th><th>Primary Billing Address City<svg><use href="#funnel"/></svg></th><th>Primary Billing Address State<svg><use href="#funnel"/></svg></th><th>IDStatus<svg><use href="#funnel"/></svg></th><th>OfficePhone<svg><use href="#funnel"/></svg></th><th>Billing Latitude</th></tr>
          <tr class="filter"><td><svg><use href="#lens"/></svg></td><td><svg><use href="#lens"/></svg></td><td><svg><use href="#lens"/></svg></td><td><svg><use href="#lens"/></svg></td><td><svg><use href="#lens"/></svg></td><td><svg><use href="#lens"/></svg></td><td></td></tr>
        </thead>
        <tbody>
          <tr><td></td><td><a href="#">Abbott Training Systems</a></td><td>Chatswood</td><td>NSW</td><td>Prospect</td><td>02 9411 3877</td><td class="num">-33.79</td></tr>
          <tr><td></td><td><a href="#">Camelle Real Estate</a></td><td>Hornsby</td><td>NSW</td><td></td><td>02 9476 5222</td><td class="num">-33.70</td></tr>
          <tr><td></td><td><a href="#">Digital Solutions Group</a></td><td>CHATSWOOD</td><td>NSW</td><td></td><td>411312299</td><td class="num">-33.79</td></tr>
          <tr><td></td><td><a href="#">Normandy</a></td><td>CHATSWOOD</td><td>NSW</td><td></td><td>9410 4200</td><td class="num">-33.79</td></tr>
        </tbody>
      </table>
    </div>
  </main>
</div>
</body>
</html>
```
FILE: styles.css
```
* { box-sizing: border-box; }

body {
  margin: 0;
  height: 100vh;
  overflow: hidden;
  display: flex;
  flex-direction: column;
  font: 14px/17px Roboto, sans-serif;
  color: #444;
  background: #fff;
}

h1, h2, h3, p { margin: 0; font-weight: 400; }
svg { fill: currentColor; }
button { font-family: inherit; cursor: pointer; }
.defs { display: none; }

/* header */
.topbar {
  display: flex;
  gap: 31px;
  height: 23px;
  flex: none;
  padding-left: 66px;
  background: #2b86d4;
  border-bottom: 2px solid #c0c4c8;
}
.topbar-line { width: 1px; height: 7px; background: #fff; }
.logo { width: 108px; height: 21px; fill: #163a5a; }

.page-head { flex: none; padding: 11px 19px 0; }
h1 { font-size: 32px; line-height: 38px; }
.crumbs { line-height: 16px; }
.crumbs a { color: #2a50e0; }

.layout { display: flex; flex: 1; min-height: 0; }

/* region list */
.sidebar {
  width: 278px;
  flex: none;
  padding: 11px 10px 0 19px;
  display: flex;
  flex-direction: column;
}
.sidebar-head { display: flex; justify-content: space-between; height: 32px; }
h2 { font: 24px/28px "Noto Sans", sans-serif; }
.new {
  width: 80px;
  border: 0;
  background: #0078d7;
  color: #fff;
  font: 700 13px "Noto Sans", sans-serif;
}
.search {
  height: 40px;
  flex: none;
  margin: 15px 0 10px;
  padding: 0 10px 2px;
  border: 1px solid #ccc;
  font: 16px Roboto, sans-serif;
}
.search::placeholder { color: #757575; }

.list-wrap { display: flex; flex: 1; min-height: 0; }
.list { flex: 1; overflow: hidden; padding: 5px 8px 0 5px; }
.scroll { width: 12px; padding: 5px 3px 0 0; }
.scroll-up {
  display: block;
  border: 5px solid transparent;
  border-top: 0;
  border-bottom: 7px solid #8b8b8b;
}
.scroll-thumb { display: block; height: 746px; margin-top: 6px; border-radius: 5px; background: #8b8b8b; }

.card {
  display: grid;
  grid-template-columns: 24px 1fr 14px;
  grid-template-rows: 23px 20px auto;
  margin-bottom: 5px;
  padding: 5px 5px 4px;
  border: 2px solid var(--c);
  background: color-mix(in srgb, var(--c) 20%, white);
  box-shadow: 0 0 6px rgba(0, 0, 0, .3);
}
.blue { --c: #2b86d6; }
.pink { --c: #d32d6e; }
.teal { --c: #2579a6; }
.green { --c: #42ab86; }
.peach { --c: #ff8549; }
.purple { --c: #4b396d; }
.red { --c: #fb3e44; }
.orange { --c: #f5752c; }

.swatch { width: 17px; height: 15px; margin: 5px 0 0 4px; border: 1px solid #777; background: var(--c); }
.card h3 { font-size: 16px; font-weight: 500; line-height: 25px; text-align: center; }
.tools { grid-area: 1 / 3 / 3 / 4; color: var(--c); padding-top: 1px; }
.tools svg { display: block; width: 14px; height: 14px; margin-bottom: 2px; }
.desc { grid-column: 1 / 3; line-height: 20px; }
.stats, .nostats { grid-column: 1 / 4; }
.stats { padding: 2px 0 1px; }
.nostats { line-height: 20px; }
.stats svg, .nostats svg { width: 12px; height: 12px; margin-left: 5px; vertical-align: -1px; color: #2b86d6; }

/* map */
main { flex: 1; min-width: 0; padding-top: 42px; color: #333; font: 13px/17px "Noto Sans", sans-serif; }
.map { position: relative; height: 477px; }
.tiles { display: block; width: 100%; height: 100%; }

.tiles path { stroke-linejoin: round; stroke-linecap: round; }
.street { fill: none; stroke: #c5c5c5; stroke-width: 3px; }
.park { fill: #c8facc; }
.bush { fill: #add19e; }
.reserve { fill: #add19e; stroke: #8fc488; stroke-width: 7px; }
.water { fill: #aad3df; }
.river, .minor, .secondary, .primary, .trunk, .motorway, .rail, .lightrail, .tunnel, .oldroad, .dashed { fill: none; }
.river { stroke: #aad3df; stroke-width: 7px; }
.minor { stroke: #fff; stroke-width: 5px; }
.secondary { stroke: #f2f3a2; stroke-width: 9px; }
.primary { stroke: #fac086; stroke-width: 11px; }
.trunk { stroke: #f3a389; stroke-width: 12px; }
.motorway { stroke: #df7d94; stroke-width: 13px; }
.rail { stroke: #777; stroke-width: 6px; }
.lightrail { stroke: #8b8b8b; stroke-width: 3px; }
.tunnel { stroke: #e59aae; stroke-width: 10px; stroke-dasharray: 12 14; }
.oldroad { stroke: #c2917a; stroke-width: 10px; }
.dashed { stroke: #9c8ca5; stroke-width: 5px; stroke-dasharray: 18 12; }
.stations { fill: #7478ae; }
.peak { fill: #d08f55; }
.pitch { fill: #88e0be; }
.region { fill: #2b86d6; fill-opacity: .2; stroke: #2b86d6; stroke-width: 3px; }

.labels { font: 12px "Noto Sans", sans-serif; fill: #333; text-anchor: middle; paint-order: stroke; stroke: rgba(255, 255, 255, .6); stroke-width: 2px; }
.labels .city { font-size: 13px; }
.nature, .lake { font-size: 11px; font-style: italic; }
.nature { fill: #2a7d2a; }
.lake { fill: #4d80b3; }
.shield { font: 12px "Noto Sans", sans-serif; fill: #5f1c30; text-anchor: middle; }
.broken { font: 12px "Liberation Sans", sans-serif; fill: #333; }
.clusters circle { fill: #fff; stroke: #2b86d6; stroke-width: 4px; }
.clusters text { font: 22px "Noto Sans", sans-serif; fill: #333; text-anchor: middle; }

.zoom {
  position: absolute;
  left: 10px;
  top: 10px;
  display: flex;
  flex-direction: column;
  border: 2px solid rgba(0, 0, 0, .2);
  border-radius: 4px;
  background-clip: padding-box;
}
.zoom button {
  width: 30px;
  height: 30px;
  padding: 0 0 2px;
  border: 0;
  background: #fff;
  color: #000;
  font: 700 20px "DejaVu Sans", sans-serif;
}
.zoom button:first-child { height: 31px; border-bottom: 1px solid #ccc; }

/* tabs */
.tabs { display: flex; height: 52px; margin-top: 10px; background: #ececec; }
.tab {
  display: flex;
  align-items: center;
  gap: 8px;
  padding: 2px 15px 0;
  border: 0;
  background: none;
  color: #444;
  font-size: 22px;
}
.tab + .tab { gap: 6px; }
.active { background: #fff; }

.options { display: flex; justify-content: center; gap: 10px; height: 38px; padding: 8px 0 0 175px; }
.options label { display: flex; align-items: flex-start; }
.options input {
  appearance: none;
  width: 20px;
  height: 20px;
  margin: 0;
  border: 2px solid #a3a3a3;
}
.options input:checked {
  border-color: #0078d7;
  background: #0078d7;
  display: grid;
  place-items: center;
}
.options input:checked::before {
  content: "";
  width: 10px;
  height: 5px;
  margin-bottom: 4px;
  border: solid #fff;
  border-width: 0 0 2px 2px;
  transform: rotate(-45deg);
}
.pin { width: 12px; height: 19px; margin: 0 4px 0 6px; color: #2d7fc4; }
.ship { color: #c6bd2c; }
.low { padding-top: 7px; }
.plain { padding: 2px 0 0 6px; }

/* data grid */
.grid-bar { display: flex; height: 68px; }
.total { width: 130px; padding-top: 16px; text-align: center; }
.total b { display: block; font-size: 20px; line-height: 26px; }
.hint { padding: 22px 0 0 12px; color: #959595; }
.actions { display: flex; gap: 5px; margin: 15px -31px 0 auto; }
.actions button {
  width: 36px;
  height: 36px;
  padding: 0;
  border: 1px solid #ddd;
  border-radius: 4px;
  background: #fff;
  color: #333;
  display: grid;
  place-items: center;
}
.actions svg { width: 14px; height: 14px; }
.actions .wide { width: 17px; height: 16px; }
.actions .last { margin-left: 15px; }

.grid-wrap { overflow: hidden; }
table { table-layout: fixed; width: 1170px; border-collapse: separate; border-spacing: 0; border-left: 1px solid #ddd; }
.c1 { width: 95px; }
.c2 { width: 254px; }
.c3 { width: 216px; }
.c4 { width: 224px; }
.c5 { width: 98px; }
.c6 { width: 123px; }
th, td { padding: 0 7px; text-align: left; border-right: 2px solid #ddd; white-space: nowrap; overflow: hidden; }
th { height: 35px; padding-top: 1px; font-weight: 400; color: #959595; border-top: 1px solid #ddd; border-bottom: 1px solid #ddd; }
th svg { float: right; width: 15px; height: 15px; color: #c6c6c6; }
.filter td { height: 34px; border-bottom: 2px solid #ddd; color: #8a8a8a; }
.filter svg { display: block; width: 12px; height: 12px; }
tbody td { height: 44px; padding: 9px 7px 0; vertical-align: top; }
tbody tr:nth-child(even) { background: #f5f5f5; }
tbody a { color: #0000ee; }
.num { color: #2b86d6; }
```
